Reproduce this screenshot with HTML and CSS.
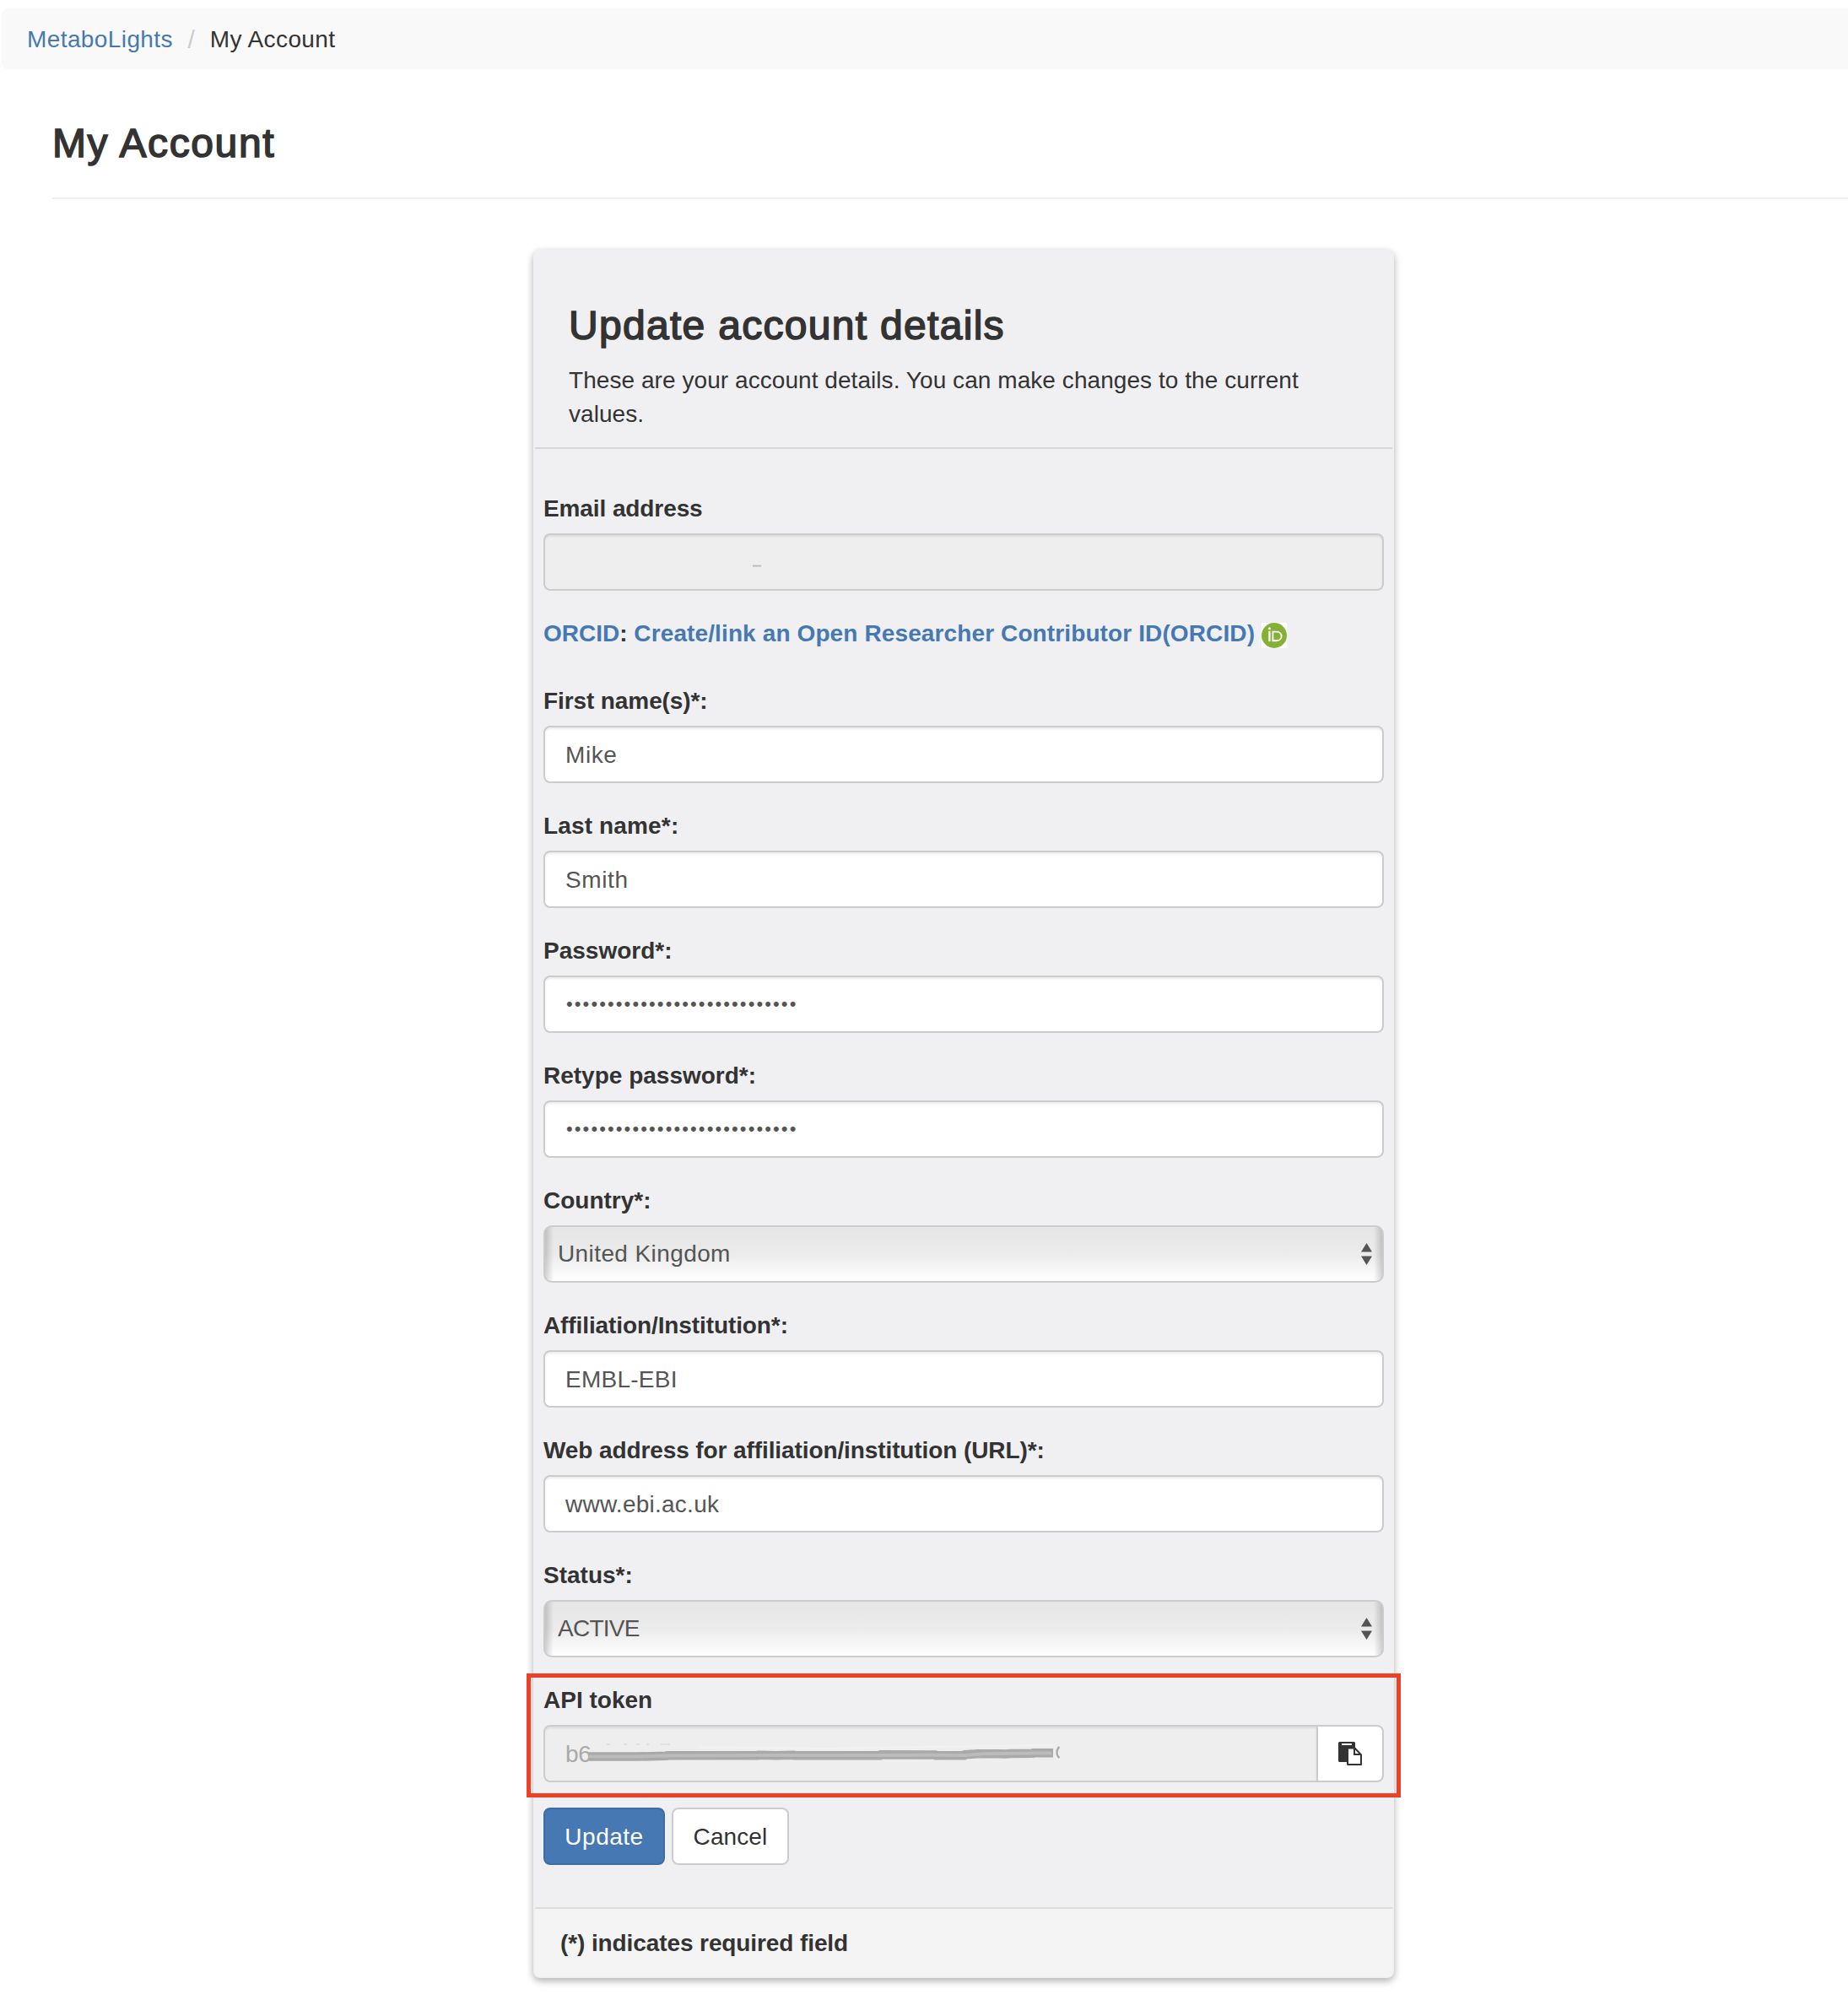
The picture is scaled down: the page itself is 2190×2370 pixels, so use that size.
FILE: index.html
```
<!DOCTYPE html>
<html lang="en">
<head>
<meta charset="utf-8">
<title>My Account</title>
<link rel="stylesheet" href="styles.css">
</head>
<body>
<nav class="breadcrumb">
  <a class="link wide" href="#">MetaboLights</a>
  <span class="divider">/</span>
  <span class="wide">My Account</span>
</nav>
<main class="page">
  <h3 class="heading page-title">My Account</h3>
  <form class="panel">
    <header class="panel-heading">
      <h3 class="heading">Update account details</h3>
      <p>These are your account details. You can make changes to the current values.</p>
    </header>
    <div class="panel-body">
      <div class="group">
        <label class="tight">Email address</label>
        <div class="control disabled">
          <svg class="mark" width="240" height="40" viewBox="0 0 240 40"><path d="M222 23.600h10" stroke="#bcbcbc" stroke-width="2"/></svg>
        </div>
      </div>
      <div class="orcid">
        <span><a class="link" href="#">ORCID</a>: <a class="link orcid-link" href="#">Create/link an Open Researcher Contributor ID(ORCID)</a></span>
        <svg class="orcid-icon" width="30" height="30" viewBox="0 0 30 30">
          <rect width="30" height="30" fill="#fff"/>
          <circle cx="15" cy="15" r="15" fill="#84b135"/>
          <circle cx="9.4" cy="6.8" r="1.5" fill="#fff"/>
          <path d="M9.4 9.7v12.4" stroke="#fff" stroke-width="2.2"/>
          <path d="M13.4 10.6h4.3c3.600 0 5.900 2.300 5.900 5.300s-2.300 5.300-5.900 5.300h-4.300z" fill="none" stroke="#fff" stroke-width="1.900"/>
        </svg>
      </div>
      <div class="group"><label class="tight">First name(s)*:</label><input class="control name" value="Mike"></div>
      <div class="group"><label class="loose">Last name*:</label><input class="control name" value="Smith"></div>
      <div class="group"><label>Password*:</label><input class="control password" type="password" value="abcdefghijklmnopqrstuvwxyz12"></div>
      <div class="group"><label>Retype password*:</label><input class="control password" type="password" value="abcdefghijklmnopqrstuvwxyz12"></div>
      <div class="group">
        <label>Country*:</label>
        <div class="control select">
          <span class="wide">United Kingdom</span>
          <svg width="13" height="26" viewBox="0 0 13 26"><path d="M6.500 0L13 10.500H0zM0 15.500h13L6.500 26z" fill="#555"/></svg>
        </div>
      </div>
      <div class="group"><label class="tight">Affiliation/Institution*:</label><input class="control institution" value="EMBL-EBI"></div>
      <div class="group"><label class="tight">Web address for affiliation/institution (URL)*:</label><input class="control institution" value="www.ebi.ac.uk"></div>
      <div class="group">
        <label>Status*:</label>
        <div class="control select">
          <span class="status">ACTIVE</span>
          <svg width="13" height="26" viewBox="0 0 13 26"><path d="M6.500 0L13 10.500H0zM0 15.500h13L6.500 26z" fill="#555"/></svg>
        </div>
      </div>
      <div class="group token">
        <label>API token</label>
        <div class="input-group">
          <div class="control disabled token-value">b6
            <svg class="scribble" width="620" height="40" viewBox="0 0 620 40">
              <path d="M73 7h4M93 7h4M108 7h4M120 7h3M137 7h11" stroke="#dcdcdc" stroke-width="1.500"/>
              <path d="M180 10.500L330 12L470 10L602 8" fill="none" stroke="#f2f2f2" stroke-width="2"/>
              <path d="M52 21.500H110L144 20.800V20.300H252V19.700L274 20.300L295 19.700V20.300H397V19.300L463 19.600V20.300H497V19.300L513 18.300H538L545 18.600L552 18L578 17.800V17.300H602" fill="none" stroke="#a9a9a9" stroke-width="10.500" stroke-linejoin="round"/>
              <path d="M52 21.500H110L144 20.500L252 20L295 20L397 20L463 19.800L497 20L520 18.300L578 17.600H600" fill="none" stroke="#bbb" stroke-width="4"/>
              <path d="M609.500 10c-4 3-4 10 0 13" fill="none" stroke="#aaa" stroke-width="2.200"/>
            </svg>
          </div>
          <button class="copy" type="button" aria-label="Copy">
            <svg width="28" height="28" viewBox="0 0 28 28">
              <path d="M1.500 0h17a1.500 1.500 0 0 1 1.500 1.500V10H10v14H1.500A1.500 1.500 0 0 1 0 22.500v-21A1.500 1.500 0 0 1 1.500 0z" fill="#333"/>
              <path d="M4 2h12v2H4z" fill="#fff"/>
              <path d="M11 7.500h8.500L27 15.500V27H11z" fill="#fff" stroke="#333" stroke-width="2" stroke-linejoin="round"/>
              <path d="M19 7.500V15h8" fill="none" stroke="#333" stroke-width="2"/>
            </svg>
          </button>
        </div>
      </div>
      <div class="actions">
        <button class="btn primary" type="button">Update</button>
        <button class="btn" type="button">Cancel</button>
      </div>
    </div>
    <footer class="panel-footer">(*) indicates required field</footer>
  </form>
</main>
</body>
</html>
```
FILE: styles.css
```
*, *::after { box-sizing: border-box; }

body {
  min-height: 2370px;
  margin: 0;
  padding-top: 10px;
  background: #fff;
  color: #333;
  font: 28px/40px "Liberation Sans", Arial, sans-serif;
}

.link { color: #4679b3; text-decoration: none; }
.wide { letter-spacing: 0.4px; }
.tight { letter-spacing: -0.1px; }
.loose { letter-spacing: 0.15px; }

.breadcrumb {
  display: flex;
  margin-left: 2px;
  padding: 17px 30px 15px;
  border-radius: 8px 0 0 8px;
  background: #f9f9f9;
}
.divider { padding: 0 18px 0 17.5px; color: #ccc; font-size: 30px; }

.page { padding-left: 62px; }

.heading {
  margin: 0;
  font-size: 48px;
  font-weight: 400;
  line-height: 53px;
  letter-spacing: 1.3px;
  -webkit-text-stroke: 1.6px #333;
}
.page-title {
  padding: 61px 0 38px;
  border-bottom: 2px solid #f0f0f0;
  letter-spacing: 1.6px;
}

.panel {
  width: 1020px;
  margin: 60px 0 0 570px;
  border: 2px solid transparent;
  border-radius: 8px;
  background: #f0f0f3;
  box-shadow: 0 4px 8px rgba(0, 0, 0, .2), 0 2px 10px rgba(0, 0, 0, .14);
}
.panel-heading {
  padding: 61px 40px 19px;
  border-bottom: 2px solid #d8d8da;
}
.panel-heading .heading { margin-bottom: 19px; }
.panel-heading p { margin: 0; letter-spacing: 0.06px; }
.panel-body {
  display: flex;
  flex-direction: column;
  gap: 30px;
  padding: 50px 10px;
}
.panel-footer {
  padding: 21px 30px 19px;
  border-top: 2px solid #dddddf;
  border-radius: 0 0 6px 6px;
  background: #f4f4f4;
  font-weight: 700;
  letter-spacing: -0.1px;
}

.group {
  display: flex;
  flex-direction: column;
  gap: 9px;
}
label { padding-top: 1px; font-weight: 700; }

.control {
  width: 100%;
  height: 68px;
  padding: 13px 24px 11px;
  border: 2px solid #ccc;
  border-radius: 8px;
  outline: 0;
  background: #fff;
  box-shadow: inset 0 2px 2px rgba(0, 0, 0, .075);
  color: #555;
  font: inherit;
}
.name { letter-spacing: 0.6px; }
.institution { letter-spacing: 0.25px; }
.password {
  padding: 12px 25px;
  font-size: 22px;
  letter-spacing: 2.1px;
}
.disabled { position: relative; background: #eee; color: #aaa; }
.mark { display: block; }

.select {
  display: flex;
  align-items: center;
  justify-content: space-between;
  padding: 11px 12px 11px 15px;
  border-radius: 10px;
  background:
    linear-gradient(90deg, rgba(0, 0, 0, .17), transparent 10px, transparent calc(100% - 10px), rgba(0, 0, 0, .17)),
    linear-gradient(#e6e6e6, #ebebeb 50%, #fff);
  box-shadow: none;
}
.status { letter-spacing: -0.75px; }

.orcid {
  display: flex;
  align-items: center;
  gap: 8px;
  height: 40px;
  margin-bottom: 10px;
  padding-top: 2px;
  font-weight: 700;
}
.orcid-link { letter-spacing: 0.117px; }
.orcid-icon { margin-top: 4px; }

.token { position: relative; }
.token::after {
  content: "";
  position: absolute;
  top: -11px;
  left: -20px;
  width: 1036px;
  height: 147px;
  border: 5px solid #ee4027;
  pointer-events: none;
}
.input-group { display: flex; }
.token-value { flex: 1; border-radius: 8px 0 0 8px; letter-spacing: -0.3px; }
.scribble { position: absolute; left: 0; top: 14px; }
.copy {
  display: flex;
  align-items: center;
  justify-content: center;
  position: relative;
  width: 80px;
  height: 68px;
  margin-left: -2px;
  padding: 0;
  border: 2px solid #ccc;
  border-radius: 0 8px 8px 0;
  background: #fff;
}

.actions { display: flex; gap: 8px; }
.btn {
  width: 139px;
  height: 68px;
  padding: 1px 0 0;
  border: 2px solid #ccc;
  border-radius: 8px;
  background: #fff;
  color: #333;
  font: inherit;
  letter-spacing: 0.1px;
}
.primary {
  width: 144px;
  border-color: #406da4;
  background: #4679b3;
  color: #fff;
  letter-spacing: 0.5px;
}
```
